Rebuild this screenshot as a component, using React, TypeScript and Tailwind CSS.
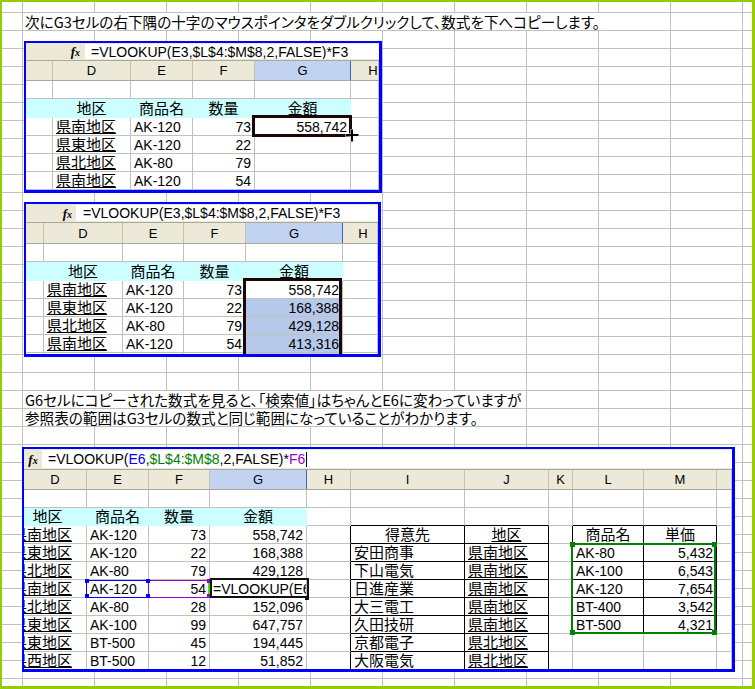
import React from "react";

const JPF = "font-['Noto_Sans_CJK_JP',sans-serif]";
const LAT = "font-['Liberation_Sans','Noto_Sans_CJK_JP',sans-serif]";

type Align = "l" | "r" | "c";
interface C {
  t?: React.ReactNode;
  a?: Align;
  jp?: boolean;
  ul?: boolean;
  bg?: string;
  rb?: string;
  bb?: string;
  shift?: boolean;
}

function Cell({ w, c }: { w: string; c: C }) {
  const align =
    c.a === "r" ? "justify-end pr-[3px]" : c.a === "c" ? "justify-center" : "justify-start pl-[3px]";
  const font = c.jp ? `${JPF} text-[15px] leading-[18px]` : `${LAT} text-[14px] leading-[16px]`;
  return (
    <div
      className={`shrink-0 h-full overflow-hidden border-r border-b ${w} ${c.rb ?? "border-r-[#c0c0c0]"} ${
        c.bb ?? "border-b-[#c0c0c0]"
      } ${c.bg ?? ""}`}
    >
      <div className={`flex items-end h-full ${align} ${c.shift ? "ml-[-15px] w-[77px]" : "w-full"}`}>
        {c.t !== undefined && (
          <span
            className={`${font} ${
              c.ul ? "underline underline-offset-[1px] decoration-1" : ""
            } text-black whitespace-nowrap`}
          >
            {c.t}
          </span>
        )}
      </div>
    </div>
  );
}

function Row({ cols, cells, h = "h-[18px]" }: { cols: string[]; cells: C[]; h?: string }) {
  return (
    <div className={`flex shrink-0 ${h}`}>
      {cols.map((w, i) => (
        <Cell key={i} w={w} c={cells[i] ?? {}} />
      ))}
    </div>
  );
}

function HeaderRow({
  cols,
  labels,
  sel,
  h,
  wide,
}: {
  cols: string[];
  labels: string[];
  sel: number;
  h: string;
  wide?: { i: number; w: string };
}) {
  return (
    <div className={`flex shrink-0 ${h} bg-[#ece9d8] border-b border-b-[#aca899]`}>
      {cols.map((w, i) => {
        const isSel = i === sel;
        const isWide = wide !== undefined && wide.i === i;
        return (
          <div
            key={i}
            className={`shrink-0 h-full overflow-hidden flex items-center border-r ${w} ${
              isWide ? "justify-start" : "justify-center"
            } ${isSel ? "bg-[#c1d3f0] border-r-[#316ac5]" : "border-r-[#c5c2b2]"}`}
          >
            <span
              className={`${LAT} text-[13px] leading-none text-black ${
                isWide ? `inline-block shrink-0 text-center ${wide!.w}` : ""
              }`}
            >
              {labels[i]}
            </span>
          </div>
        );
      })}
    </div>
  );
}

function Fx() {
  return (
    <span className="font-['Liberation_Serif',serif] italic font-bold text-[13px] leading-none text-black">
      f<span className="text-[10px]">x</span>
    </span>
  );
}

function FBar({
  h,
  fxW,
  fxCls,
  textPl,
  children,
}: {
  h: string;
  fxW: string;
  fxCls: string;
  textPl: string;
  children: React.ReactNode;
}) {
  return (
    <div className={`flex shrink-0 ${h} bg-[#ece9d8] border-b border-b-[#aca899]`}>
      <div className={`shrink-0 ${fxW} flex items-center ${fxCls}`}>
        <Fx />
      </div>
      <div
        className={`flex-1 bg-white my-[1px] flex items-center ${textPl} ${LAT} text-[14px] leading-none text-black whitespace-nowrap overflow-hidden`}
      >
        {children}
      </div>
    </div>
  );
}

const CY: C = { bg: "bg-[#ccffff]", rb: "border-r-[#ccffff]", bb: "border-b-[#ccffff]" };
const SEL = "bg-[#b7c9ea]";

const B1 = ["w-[27px]", "w-[78px]", "w-[62px]", "w-[62px]", "w-[96px]", "flex-1"];
const B2 = ["w-[18px]", "w-[79px]", "w-[61px]", "w-[62px]", "w-[97px]", "flex-1"];
const B3 = [
  "w-[63px]",
  "w-[62px]",
  "w-[61px]",
  "w-[97px]",
  "w-[44px]",
  "w-[114px]",
  "w-[84px]",
  "w-[24px]",
  "w-[71px]",
  "w-[73px]",
  "flex-1",
];

const FORMULA = "=VLOOKUP(E3,$L$4:$M$8,2,FALSE)*F3";

function Box1() {
  const d = [
    ["県南地区", "AK-120", "73", "558,742"],
    ["県東地区", "AK-120", "22", ""],
    ["県北地区", "AK-80", "79", ""],
    ["県南地区", "AK-120", "54", ""],
  ];
  return (
    <div className="relative ml-[22px] mt-[11px] w-[358px] h-[152px] shrink-0 flex flex-col bg-white overflow-hidden border-solid border-[#0000ff] border-l-2 border-t-2 border-r-[3px] border-b-[3px]">
      <FBar h="h-[18px]" fxW="w-[59px]" fxCls="justify-end pr-[5px]" textPl="pl-[6px]">
        {FORMULA}
      </FBar>
      <HeaderRow cols={B1} labels={["", "D", "E", "F", "G", "H"]} sel={4} h="h-[20px]" wide={{ i: 5, w: "w-[44px]" }} />
      <Row cols={B1} cells={[]} />
      <Row
        cols={B1}
        h="h-[19px]"
        cells={[
          CY,
          { ...CY, t: "地区", jp: true, a: "c" },
          { ...CY, t: "商品名", jp: true, a: "c" },
          { ...CY, t: "数量", jp: true, a: "c" },
          { ...CY, t: "金額", jp: true, a: "c" },
          {},
        ]}
      />
      {d.map((r, i) => (
        <Row
          key={i}
          cols={B1}
          cells={[
            {},
            { t: r[0], jp: true, ul: true },
            { t: r[1] },
            { t: r[2], a: "r" },
            { t: r[3] || undefined, a: "r" },
            {},
          ]}
        />
      ))}
      <Row cols={B1} cells={[]} />
      {/* active cell border */}
      <div className="absolute left-[226px] top-[72px] w-[100px] h-[22px] border-[3px] border-solid border-[#1c0606]" />
      {/* crosshair cursor */}
      <svg className="absolute left-[319px] top-[86px]" width="14" height="13" viewBox="0 0 14 13">
        <rect x="0" y="4.5" width="14" height="3" fill="#fff" />
        <rect x="5.5" y="0" width="3" height="13" fill="#fff" />
        <rect x="0.5" y="5" width="13" height="2" fill="#000" />
        <rect x="6" y="0.5" width="2" height="12" fill="#000" />
      </svg>
    </div>
  );
}

function Box2() {
  const d = [
    ["県南地区", "AK-120", "73", "558,742"],
    ["県東地区", "AK-120", "22", "168,388"],
    ["県北地区", "AK-80", "79", "429,128"],
    ["県南地区", "AK-120", "54", "413,316"],
    ["県北地区", "AK-80", "28", "152,096"],
  ];
  return (
    <div className="relative ml-[22px] mt-[9px] w-[357px] h-[155px] shrink-0 flex flex-col bg-white overflow-hidden border-solid border-[#0000ff] border-l-2 border-t-2 border-r-[3px] border-b-[3px]">
      <FBar h="h-[19px]" fxW="w-[50px]" fxCls="justify-end pr-[4px]" textPl="pl-[7px]">
        {FORMULA}
      </FBar>
      <HeaderRow cols={B2} labels={["", "D", "E", "F", "G", "H"]} sel={4} h="h-[21px]" wide={{ i: 5, w: "w-[40px]" }} />
      <Row cols={B2} cells={[]} />
      <Row
        cols={B2}
        h="h-[19px]"
        cells={[
          CY,
          { ...CY, t: "地区", jp: true, a: "c" },
          { ...CY, t: "商品名", jp: true, a: "c" },
          { ...CY, t: "数量", jp: true, a: "c" },
          { ...CY, t: "金額", jp: true, a: "c" },
          {},
        ]}
      />
      {d.map((r, i) => (
        <Row
          key={i}
          cols={B2}
          cells={[
            {},
            { t: r[0], jp: true, ul: true },
            { t: r[1] },
            { t: r[2], a: "r" },
            { t: r[3], a: "r", bg: i === 0 ? "" : SEL },
            {},
          ]}
        />
      ))}
      <div className="absolute left-[217px] top-[74px] w-[99px] h-[110px] border-[3px] border-solid border-[#1c0606]" />
    </div>
  );
}

function Box3() {
  const left = [
    ["県南地区", "AK-120", "73", "558,742"],
    ["県東地区", "AK-120", "22", "168,388"],
    ["県北地区", "AK-80", "79", "429,128"],
    ["県南地区", "AK-120", "54", "=VLOOKUP(E6"],
    ["県北地区", "AK-80", "28", "152,096"],
    ["県東地区", "AK-100", "99", "647,757"],
    ["県東地区", "BT-500", "45", "194,445"],
    ["県西地区", "BT-500", "12", "51,852"],
  ];
  const cust = [
    ["得意先", "地区"],
    ["安田商事", "県南地区"],
    ["下山電気", "県南地区"],
    ["日進産業", "県南地区"],
    ["大三電工", "県南地区"],
    ["久田技研", "県南地区"],
    ["京都電子", "県北地区"],
    ["大阪電気", "県北地区"],
  ];
  const price = [
    ["商品名", "単価"],
    ["AK-80", "5,432"],
    ["AK-100", "6,543"],
    ["AK-120", "7,654"],
    ["BT-400", "3,542"],
    ["BT-500", "4,321"],
  ];
  const BK = { rb: "border-r-black", bb: "border-b-black" };
  return (
    <div className="relative ml-[20px] mt-[21px] w-[713px] h-[225px] shrink-0 flex flex-col bg-white overflow-hidden border-solid border-[#0000ff] border-l-2 border-t-2 border-r-[3px] border-b-[3px]">
      <FBar h="h-[21px]" fxW="w-[18px]" fxCls="justify-center" textPl="pl-[6px]">
        <span>=VLOOKUP(</span>
        <span className="text-[#0000ff]">E6</span>
        <span>,</span>
        <span className="text-[#008000]">$L$4:$M$8</span>
        <span>,2,FALSE)*</span>
        <span className="text-[#9900cc]">F6</span>
        <span className="inline-block w-px h-[15px] bg-black ml-px" />
      </FBar>
      <HeaderRow cols={B3} labels={["D", "E", "F", "G", "H", "I", "J", "K", "L", "M", ""]} sel={3} h="h-[20px]" />
      <Row cols={B3} cells={[]} />
      <Row
        cols={B3}
        cells={[
          { ...CY, t: "地区", jp: true, a: "c", shift: true },
          { ...CY, t: "商品名", jp: true, a: "c" },
          { ...CY, t: "数量", jp: true, a: "c" },
          { ...CY, t: "金額", jp: true, a: "c" },
          {},
          { bb: "border-b-black" },
          { bb: "border-b-black" },
          {},
          { bb: "border-b-black" },
          { bb: "border-b-black" },
          {},
        ]}
      />
      {left.map((r, i) => {
        const c = cust[i];
        const p = price[i];
        const hdr = i === 0;
        const cells: C[] = [
          { t: r[0], jp: true, ul: true, shift: true },
          { t: r[1] },
          { t: r[2], a: "r" },
          i === 3 ? { t: r[3] } : { t: r[3], a: "r" },
          { rb: "border-r-black" },
          { ...BK, t: c[0], jp: true, a: hdr ? "c" : "l" },
          { ...BK, t: c[1], jp: true, ul: true, a: hdr ? "c" : "l" },
          p ? { rb: "border-r-black" } : {},
          p ? { ...BK, t: p[0], jp: hdr, a: hdr ? "c" : "l" } : {},
          p ? { ...BK, t: p[1], jp: hdr, a: hdr ? "c" : "r" } : {},
          {},
        ];
        return <Row key={i} cols={B3} cells={cells} />;
      })}

      {/* E6 reference (blue) */}
      <div className="absolute left-[62px] top-[131px] w-[63px] h-[18px] border border-solid border-[#0000ff]" />
      {/* F6 reference (purple) */}
      <div className="absolute left-[124px] top-[131px] w-[62px] h-[18px] border border-solid border-[#9900cc]" />
      <div className="absolute left-[61px] top-[130px] w-[4px] h-[4px] bg-[#0000ff]" />
      <div className="absolute left-[122px] top-[130px] w-[4px] h-[4px] bg-[#0000ff]" />
      <div className="absolute left-[61px] top-[145px] w-[4px] h-[4px] bg-[#0000ff]" />
      <div className="absolute left-[122px] top-[145px] w-[4px] h-[4px] bg-[#0000ff]" />
      <div className="absolute left-[183px] top-[130px] w-[4px] h-[4px] bg-[#9900cc]" />
      <div className="absolute left-[183px] top-[145px] w-[4px] h-[4px] bg-[#9900cc]" />
      <div className="absolute left-[184px] top-[134px] w-[2px] h-[11px] bg-[#55dd00]" />
      {/* active editing cell */}
      <div className="absolute left-[186px] top-[129px] w-[99px] h-[20px] border-2 border-solid border-[#111]" />
      <div className="absolute left-[281px] top-[147px] w-[4px] h-[4px] bg-[#111]" />
      {/* green range $L$4:$M$8 */}
      <div className="absolute left-[547px] top-[94px] w-[145px] h-[91px] border-2 border-solid border-[#008000]" />
      <div className="absolute left-[546px] top-[93px] w-[5px] h-[5px] bg-[#008000]" />
      <div className="absolute left-[688px] top-[93px] w-[5px] h-[5px] bg-[#008000]" />
      <div className="absolute left-[546px] top-[181px] w-[5px] h-[5px] bg-[#008000]" />
      <div className="absolute left-[688px] top-[181px] w-[5px] h-[5px] bg-[#008000]" />
    </div>
  );
}

function TextStrip({ w, mt, children }: { w: string; mt: string; children: React.ReactNode }) {
  return (
    <div
      className={`ml-[21px] ${mt} ${w} h-[17px] shrink-0 bg-white pl-[2px] overflow-hidden whitespace-nowrap ${JPF} text-[14.6px] leading-[17px] text-black [font-feature-settings:'palt']`}
    >
      {children}
    </div>
  );
}

export default function App() {
  return (
    <div className="w-[755px] h-[689px] overflow-hidden flex flex-col bg-white border-solid border-[#99cc00] border-l-2 border-t-2 border-r-[3px] border-b-[3px] bg-[linear-gradient(to_right,#c0c0c0_1px,transparent_1px),linear-gradient(to_bottom,#c0c0c0_1px,transparent_1px)] bg-[size:72px_18px] bg-[position:20px_10px]">
      <TextStrip w="w-[647px]" mt="mt-[11px]">
        次にG3セルの右下隅の十字のマウスポインタをダブルクリックして、数式を下へコピーします。
      </TextStrip>
      <Box1 />
      <Box2 />
      <TextStrip w="w-[503px]" mt="mt-[34px]">
        G6セルにコピーされた数式を見ると、「検索値」はちゃんとE6に変わっていますが
      </TextStrip>
      <TextStrip w="w-[503px]" mt="mt-[1px]">
        参照表の範囲はG3セルの数式と同じ範囲になっていることがわかります。
      </TextStrip>
      <Box3 />
    </div>
  );
}
